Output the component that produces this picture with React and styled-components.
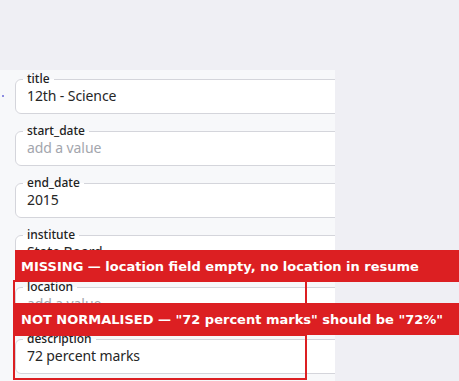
import React from 'react'
import styled, { createGlobalStyle } from 'styled-components'

const GlobalStyle = createGlobalStyle`
  html, body {
    margin: 0;
    padding: 0;
    background: #efeff4;
    font-family: 'Noto Sans', 'Open Sans', sans-serif;
  }
`

const Page = styled.div`
  position: relative;
  width: 459px;
  height: 381px;
  overflow: hidden;
  background: #efeff4;
`

const Panel = styled.div`
  margin-top: 70px;
  width: 335px;
  height: 311px;
  overflow: hidden;
  background: #f7f8fa;
  box-sizing: border-box;
  padding-top: 2px;
  display: flex;
  flex-direction: column;
  gap: 10px;
`

const Row = styled.div`
  display: flex;
  align-items: center;
`

const Gutter = styled.div`
  width: 15px;
  flex: none;
  display: flex;
  justify-content: flex-start;
  padding-top: 6px;
`

const Dot = styled.span`
  width: 2px;
  height: 2px;
  margin-left: 2px;
  border-radius: 50%;
  background: #6a6ad8;
`

const Field = styled.fieldset`
  margin: 0;
  width: 360px;
  flex: none;
  box-sizing: border-box;
  padding: 0 11px 7px;
  border: 1px solid #d4d5db;
  border-radius: 6px;
  background: #fff;
  min-width: 0;
`

const Label = styled.legend`
  margin-left: -4px;
  padding: 0 4px;
  font-size: 12px;
  line-height: 14px;
  font-weight: 500;
  color: #222;
`

const Value = styled.div`
  font-size: 14px;
  line-height: 20px;
  letter-spacing: -0.1px;
  color: ${p => (p.empty ? '#a3a6ad' : '#262626')};
`

const Banner = styled.div`
  position: absolute;
  left: ${p => p.left}px;
  top: ${p => p.top}px;
  right: 0;
  height: 32px;
  box-sizing: border-box;
  padding-left: ${p => 21 - p.left}px;
  display: flex;
  align-items: center;
  background: #dc1f22;
  color: #fff;
  font-family: 'DejaVu Sans', Verdana, sans-serif;
  font-weight: 700;
  font-size: 13px;
  white-space: nowrap;
`

const Outline = styled.div`
  position: absolute;
  left: 13px;
  width: 294px;
  top: ${p => p.top}px;
  height: ${p => p.height}px;
  box-sizing: border-box;
  border: 2px solid #dc1f22;
`

const fields = [
  { name: 'title', value: '12th - Science', dot: true },
  { name: 'start_date' },
  { name: 'end_date', value: '2015' },
  { name: 'institute', value: 'State Board' },
  { name: 'location' },
  { name: 'description', value: '72 percent marks' },
]

export default function App() {
  return (
    <Page>
      <GlobalStyle />
      <Panel>
        {fields.map(f => (
          <Row key={f.name}>
            <Gutter>{f.dot && <Dot />}</Gutter>
            <Field>
              <Label>{f.name}</Label>
              <Value empty={!f.value}>{f.value || 'add a value'}</Value>
            </Field>
          </Row>
        ))}
      </Panel>
      <Outline top={280} height={30} />
      <Outline top={334} height={46} />
      <Banner left={15} top={250}>MISSING — location field empty, no location in resume</Banner>
      <Banner left={13} top={303}>NOT NORMALISED — "72 percent marks" should be "72%"</Banner>
    </Page>
  )
}
